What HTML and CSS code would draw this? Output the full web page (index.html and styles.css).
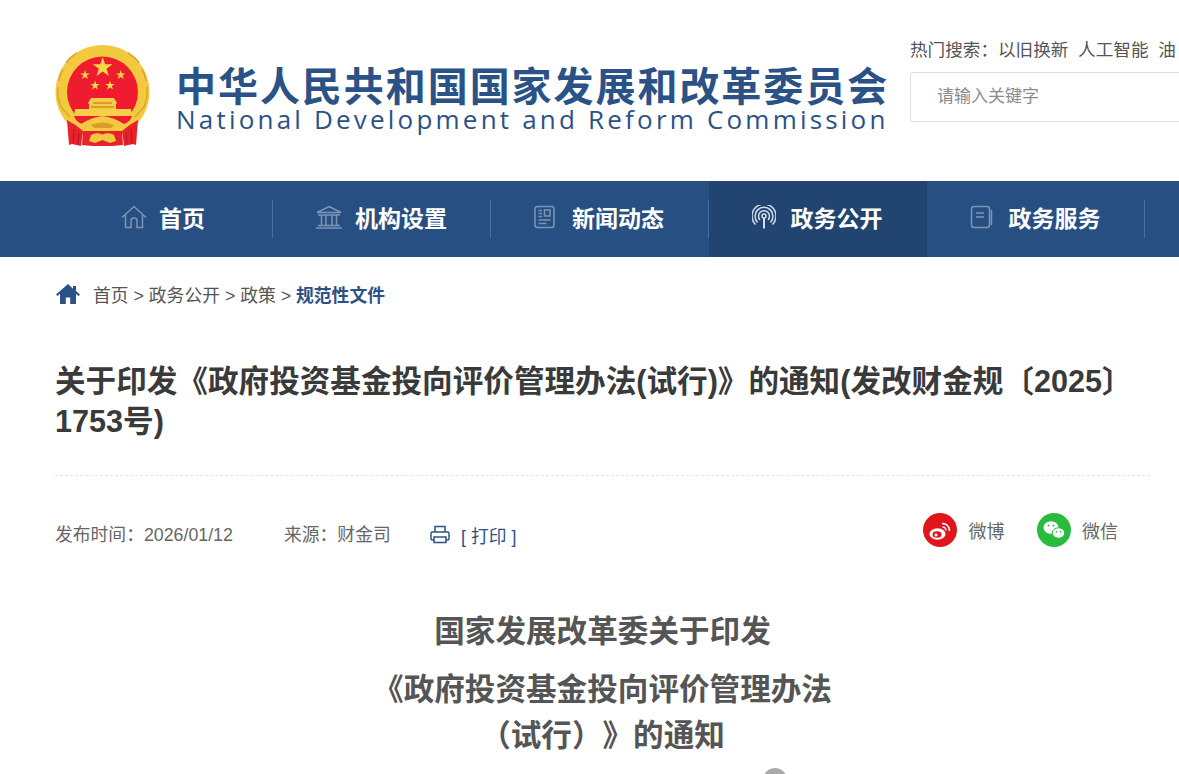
FILE: index.html
```html
<!DOCTYPE html>
<html lang="zh-CN">
<head>
<meta charset="utf-8">
<title>关于印发《政府投资基金投向评价管理办法(试行)》的通知</title>
<link rel="stylesheet" href="styles.css">
</head>
<body>
<div class="page">
  <header class="header">
    <svg class="emblem" viewBox="0 0 96 102" width="96" height="102">
      <defs>
        <polygon id="star" points="0,-1 .225,-.309 .951,-.309 .363,.118 .588,.809 0,.382 -.588,.809 -.363,.118 -.951,-.309 -.225,-.309" fill="#f9d84a"/>
      </defs>
      <circle cx="47.500" cy="47" r="47" fill="#f3c93f"/>
      <path d="M3 42q-1 10 3 20l9 10M92 42q1 10-3 20l-9 10M8 24q-3 5-4 12M87 24q3 5 4 12M22 8q-7 4-11 10M73 8q7 4 11 10" stroke="#dca62c" stroke-width="1.500" fill="none"/>
      <circle cx="47.500" cy="47" r="35.500" fill="#ee1c2e"/>
      <use href="#star" transform="translate(47.700 22.500) scale(10.500)"/>
      <use href="#star" transform="translate(30 30) scale(5)"/>
      <use href="#star" transform="translate(65.700 30) scale(5)"/>
      <use href="#star" transform="translate(40 40.500) scale(5)"/>
      <use href="#star" transform="translate(55 40.500) scale(5)"/>
      <path d="M36 53h23l3 5-1 1v5H34v-5l-1-1z" fill="#f3cc4a"/>
      <path d="M38 57h19v2H38zM36 61h23v2H36z" fill="#d99d2c"/>
      <path d="M20 64h56l1 7H19z" fill="#f5cf48"/>
      <path d="M19 71h58q-2 6-8 8H27q-6-2-8-8z" fill="#ee1c2e"/>
      <path d="M26 79q11-7 21.500-8 10.500 1 21.500 8l-1 8H27z" fill="#f3c93f"/>
      <path d="M36 80q11.500-5 23 0l-3 3H39z" fill="#d99d2c"/>
      <path d="M12 75q8 4 16 11l-2 15-9-2-3 1z" fill="#e8222c"/>
      <path d="M83 75q-8 4-16 11l2 15 9-2 3 1z" fill="#e8222c"/>
      <path d="M19 84l-1 14M24 88l-1 11M76 84l1 14M71 88l1 11" stroke="#b8141e" stroke-width="1"/>
      <path d="M28 86h39l1 14-11 1H38l-11-1z" fill="#e8222c"/>
      <path d="M36 90q5-3 11.500-.500Q54 87 59 90l2 6-6 2-7.500-3-7.500 3-6-2z" fill="#f3c93f"/>
    </svg>
    <div class="brand">
      <div class="brand-cn">中华人民共和国国家发展和改革委员会</div>
      <div class="brand-en">National Development and Reform Commission</div>
    </div>
    <div class="search-area">
      <div class="hot">热门搜索：以旧换新&nbsp;&nbsp;人工智能&nbsp;&nbsp;油</div>
      <div class="search-box">请输入关键字</div>
    </div>
  </header>

  <nav class="nav">
    <a class="nav-item">
      <svg class="nav-icon" width="26" height="24" viewBox="0 0 26 24"><path d="M1 12.500L13 1.500l12 11M4.500 10v12.500h5.500v-7q0-2.500 3-2.500t3 2.500v7h5.500V10"/></svg>
      <span>首页</span>
    </a>
    <a class="nav-item">
      <svg class="nav-icon" width="28" height="24" viewBox="0 0 28 24"><path d="M14 1.500L26 7.500H2zM3 10h22M6.500 10v10M11 10v10M17 10v10M21.500 10v10M3 20.500h22M1 23h26"/></svg>
      <span>机构设置</span>
    </a>
    <a class="nav-item wide">
      <svg class="nav-icon" width="21" height="24" viewBox="0 0 21 24"><rect x="1" y="1.500" width="19" height="21" rx="2.500"/><rect x="10.500" y="5" width="5.500" height="6"/><path d="M4.500 5.500H8M4.500 8.500H8M4.500 11.500H8M4.500 15h12M4.500 18.500h8"/></svg>
      <span>新闻动态</span>
    </a>
    <a class="nav-item active">
      <svg class="nav-icon light" width="24" height="24" viewBox="0 0 24 24"><path d="M12 13v10.500" stroke-width="2"/><circle cx="12" cy="11" r="2"/><path d="M8 15a5.500 5.500 0 1 1 8 0M5.500 17.500a9 9 0 1 1 13 0M3.500 19.500a12 12 0 1 1 17 0" stroke-width="1.500"/></svg>
      <span>政务公开</span>
    </a>
    <a class="nav-item mid">
      <svg class="nav-icon" width="23" height="24" viewBox="0 0 23 24"><path d="M17 1.500H4q-2.500 0-2.500 2.500v16q0 2.500 2.500 2.500h13q2.500 0 2.500-2.500V4q0-2.500-2.500-2.500M21.500 5v15"/><path d="M6 8h8M6 12h8"/></svg>
      <span>政务服务</span>
    </a>
  </nav>

  <main class="content">
    <div class="crumb">
      <svg class="crumb-home" width="24" height="20" viewBox="0 0 24 20"><path d="M12 0L0 10.500l1.500 1.500L4 9.800V20h5.800v-6.500h4.400V20H20V9.800l2.500 2.200 1.500-1.500-4-3.500V2h-3v2.800z"/></svg>
      <span>首页 &gt; 政务公开 &gt; 政策 &gt; <b>规范性文件</b></span>
    </div>

    <h1 class="title">关于印发《政府投资基金投向评价管理办法(试行)》的通知(发改财金规〔2025〕1753号)</h1>

    <div class="meta">
      <span class="meta-date">发布时间：2026/01/12</span>
      <span class="meta-source">来源：财金司</span>
      <a class="print">
        <svg width="20" height="19" viewBox="0 0 20 19"><path d="M5 7V1.500h10V7M4.500 15H2.500Q1 15 1 13.500V8.500Q1 7 2.500 7h15Q19 7 19 8.500v5q0 1.500-1.500 1.500h-2M4 12h12v5.500H4z"/></svg>
        <span>[ 打印 ]</span>
      </a>
      <div class="share">
        <a class="share-item">
          <svg width="34" height="34" viewBox="0 0 34 34"><circle cx="17" cy="17" r="17" fill="#e0161c"/><ellipse cx="14.500" cy="21" rx="8" ry="5.800" fill="#fff"/><ellipse cx="14" cy="21.500" rx="4.500" ry="3.200" fill="#e0161c"/><circle cx="13" cy="22" r="1.500" fill="#fff"/><path d="M19 10.500a7 7 0 0 1 7.500 7.500M19.500 14a3.500 3.500 0 0 1 3.500 3.500" fill="none" stroke="#fff" stroke-width="1.500"/></svg>
          <span>微博</span>
        </a>
        <a class="share-item">
          <svg width="34" height="34" viewBox="0 0 34 34"><circle cx="17" cy="17" r="17" fill="#28bb3e"/><ellipse cx="14" cy="14.500" rx="7.500" ry="6.300" fill="#fff"/><ellipse cx="21.500" cy="20" rx="6.300" ry="5.200" fill="#fff" stroke="#28bb3e"/><circle cx="11.500" cy="12.500" r="1" fill="#28bb3e"/><circle cx="16.500" cy="12.500" r="1" fill="#28bb3e"/><circle cx="19.500" cy="18.800" r=".9" fill="#28bb3e"/><circle cx="23.500" cy="18.800" r=".9" fill="#28bb3e"/></svg>
          <span>微信</span>
        </a>
      </div>
    </div>

    <article class="article">
      <p class="doc-head first">国家发展改革委关于印发</p>
      <p class="doc-head">《政府投资基金投向评价管理办法</p>
      <p class="doc-head">（试行）》的通知</p>
      <div class="doc-mark"></div>
    </article>
  </main>
</div>
</body>
</html>
```

FILE: styles.css
```css
* { box-sizing: border-box; }
html, body { margin: 0; padding: 0; height: 100%; overflow: hidden; background: #fff; }
body { font-family: "Liberation Sans", "Noto Sans CJK SC", sans-serif; color: #333; }
a { color: inherit; text-decoration: none; }
p, h1 { margin: 0; }
.page { width: 1179px; }

.header { height: 181px; display: flex; align-items: flex-start; padding: 45px 0 0 55px; }
.emblem { flex: none; margin-right: 25px; }
.brand { flex: none; width: 710px; margin-right: 24px; padding-top: 17px; }
.brand-cn { font-family: "Noto Sans CJK SC", sans-serif; font-size: 40px; line-height: 44px; font-weight: 700; letter-spacing: 1.95px; color: #2a5286; white-space: nowrap; }
.brand-en { font-family: "Open Sans", sans-serif; font-size: 26px; line-height: 26px; letter-spacing: 3.2px; color: #2a5286; white-space: nowrap; }
.search-area { flex: 1; min-width: 0; margin-top: -5px; }
.hot { font-size: 17.6px; line-height: 20px; color: #555; white-space: nowrap; overflow: hidden; }
.search-box { margin-top: 12px; height: 50px; border: 1px solid #e0e0e0; border-right: none; border-radius: 4px 0 0 4px; padding-left: 26px; font-size: 17px; line-height: 48px; color: #8a8a8a; }

.nav { height: 76px; background: #284f82; display: flex; padding-left: 55px; }
.nav-item { position: relative; flex: none; width: 218px; padding: 0 2px 5px 0; display: flex; align-items: center; justify-content: center; gap: 12px; color: #fff; font-family: "Noto Sans CJK SC", sans-serif; font-size: 23px; font-weight: 700; }
.nav-item.wide { gap: 17px; }
.nav-item.mid { gap: 16px; }
.nav-item::after { content: ""; position: absolute; right: 0; top: 19px; width: 1px; height: 38px; background: #4d6f9b; }
.nav-item.active { background: #214470; gap: 15px; }
.nav-item.active::after { display: none; }
.nav-icon { flex: none; fill: none; stroke: #7d95b5; stroke-width: 1.500; }
.nav-icon.light { stroke: #d7deea; }

.content { padding: 0 29px 0 55px; }
.crumb { display: flex; align-items: center; gap: 13px; height: 20px; margin-top: 27px; font-size: 17.8px; color: #555; white-space: nowrap; }
.crumb-home { fill: #2a5286; flex: none; margin-left: 1px; }
.crumb b { color: #2a5286; }

.title { margin-top: 57px; font-size: 30.6px; line-height: 40px; font-weight: 700; color: #3a3a3a; }
.meta { display: flex; align-items: center; margin-top: 34px; padding-top: 38px; border-top: 1px dashed #e6e6e6; height: 73px; font-size: 17.8px; color: #666; }
.meta-date { width: 229px; margin-top: 4px; }
.meta-source { width: 146px; margin-top: 4px; }
.print { display: flex; align-items: center; gap: 11px; color: #2a5286; margin-top: 7px; }
.print svg { fill: none; stroke: #2a5286; stroke-width: 1.500; }
.share { margin-left: auto; margin-right: 32px; display: flex; gap: 32px; margin-top: -3px; }
.share-item { display: flex; align-items: center; gap: 11.500px; font-size: 18px; color: #666; }

.article { margin-top: 58px; text-align: center; }
.doc-head { font-family: "Noto Sans CJK SC", sans-serif; font-size: 30.6px; line-height: 46px; font-weight: 700; color: #555; text-spacing-trim: space-all; }
.doc-head.first { margin-bottom: 12px; }
.doc-mark { width: 24px; height: 24px; margin: 12px 0 0 708px; border-radius: 50%; background: #aaa; }
```
